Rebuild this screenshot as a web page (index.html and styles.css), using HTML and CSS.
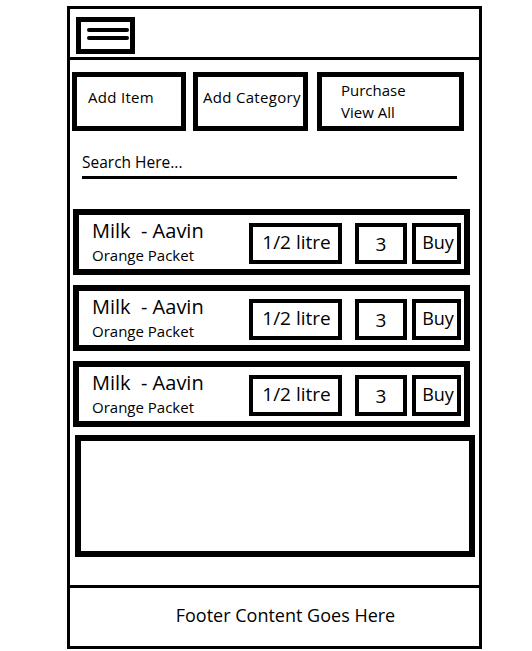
FILE: index.html
```html
<!DOCTYPE html>
<html>
<head>
<meta charset="utf-8">
<link rel="stylesheet" href="styles.css">
</head>
<body>
<div class="phone">
  <header class="header">
    <div class="menu-btn">
      <span class="bar"></span>
      <span class="bar"></span>
    </div>
  </header>
  <main class="main">
    <div class="actions">
      <div class="action action-item">Add Item</div>
      <div class="action action-cat">Add Category</div>
      <div class="action action-purchase">Purchase<br>View All</div>
    </div>
    <div class="search">Search Here...</div>
    <div class="list">
      <div class="card">
        <div class="info">
          <div class="title">Milk &nbsp;- Aavin</div>
          <div class="sub">Orange Packet</div>
        </div>
        <div class="box box-qty">1/2 litre</div>
        <div class="box box-count">3</div>
        <div class="box box-buy">Buy</div>
      </div>
      <div class="card">
        <div class="info">
          <div class="title">Milk &nbsp;- Aavin</div>
          <div class="sub">Orange Packet</div>
        </div>
        <div class="box box-qty">1/2 litre</div>
        <div class="box box-count">3</div>
        <div class="box box-buy">Buy</div>
      </div>
      <div class="card">
        <div class="info">
          <div class="title">Milk &nbsp;- Aavin</div>
          <div class="sub">Orange Packet</div>
        </div>
        <div class="box box-qty">1/2 litre</div>
        <div class="box box-count">3</div>
        <div class="box box-buy">Buy</div>
      </div>
    </div>
    <div class="panel"></div>
  </main>
  <footer class="footer">Footer Content Goes Here</footer>
</div>
</body>
</html>
```

FILE: styles.css
```css
* { box-sizing: border-box; }
html, body { margin: 0; padding: 0; background: #fff; }
body {
  font-family: "Open Sans", "Noto Sans", sans-serif;
  color: #000;
}
.phone {
  margin: 6px 0 0 67px;
  width: 415px;
  height: 643px;
  border: 3px solid #000;
  display: flex;
  flex-direction: column;
}
.header {
  height: 51px;
  border-bottom: 3px solid #000;
  flex: none;
  padding: 8px 0 0 6px;
}
.menu-btn {
  width: 59px;
  height: 37px;
  border: 5px solid #000;
  padding: 6px 0 0 6px;
  display: flex;
  flex-direction: column;
  gap: 4px;
}
.bar {
  display: block;
  width: 42px;
  height: 4px;
  background: #000;
  border-radius: 2px;
}
.main {
  flex: 1;
  display: flex;
  flex-direction: column;
}
.actions {
  display: flex;
  margin: 12px 0 0 2px;
}
.action {
  height: 59px;
  border: 5px solid #000;
  font-size: 15px;
  line-height: 22px;
}
.action-item { width: 114px; padding: 9px 0 0 11px; letter-spacing: 0.3px; }
.action-cat { width: 115px; margin-left: 7px; padding: 9px 0 0 5px; letter-spacing: 0.3px; }
.action-purchase { width: 147px; margin-left: 9px; padding: 2px 0 0 19px; }
.search {
  margin: 21px 0 0 12px;
  width: 375px;
  font-size: 15.5px;
  line-height: 20px;
  padding-bottom: 4px;
  border-bottom: 3px solid #000;
}
.list {
  display: flex;
  flex-direction: column;
  gap: 10px;
  margin: 30px 0 0 3px;
}
.card {
  width: 397px;
  height: 66px;
  border: 6px solid #000;
  display: flex;
  align-items: flex-start;
  padding: 0 3px 0 13px;
}
.info { flex: 1; padding-top: 5px; }
.title { font-size: 20px; line-height: 22px; }
.sub { font-size: 15px; line-height: 18px; margin-top: 4px; }
.box {
  margin-top: 8px;
  height: 41px;
  border: 4px solid #000;
  font-size: 19px;
  display: flex;
  align-items: center;
  justify-content: center;
  padding-bottom: 3px;
}
.box-qty { width: 93px; padding-left: 2px; }
.box-count { width: 52px; margin-left: 13px; padding-bottom: 0; }
.box-buy { width: 49px; margin-left: 5px; padding-left: 3px; font-size: 18px; }
.panel {
  margin: 8px 0 0 5px;
  width: 400px;
  height: 122px;
  border: 6px solid #000;
}
.footer {
  flex: none;
  height: 61px;
  border-top: 3px solid #000;
  display: flex;
  align-items: center;
  justify-content: center;
  padding: 0 0 4px 22px;
  font-size: 18px;
}
```
